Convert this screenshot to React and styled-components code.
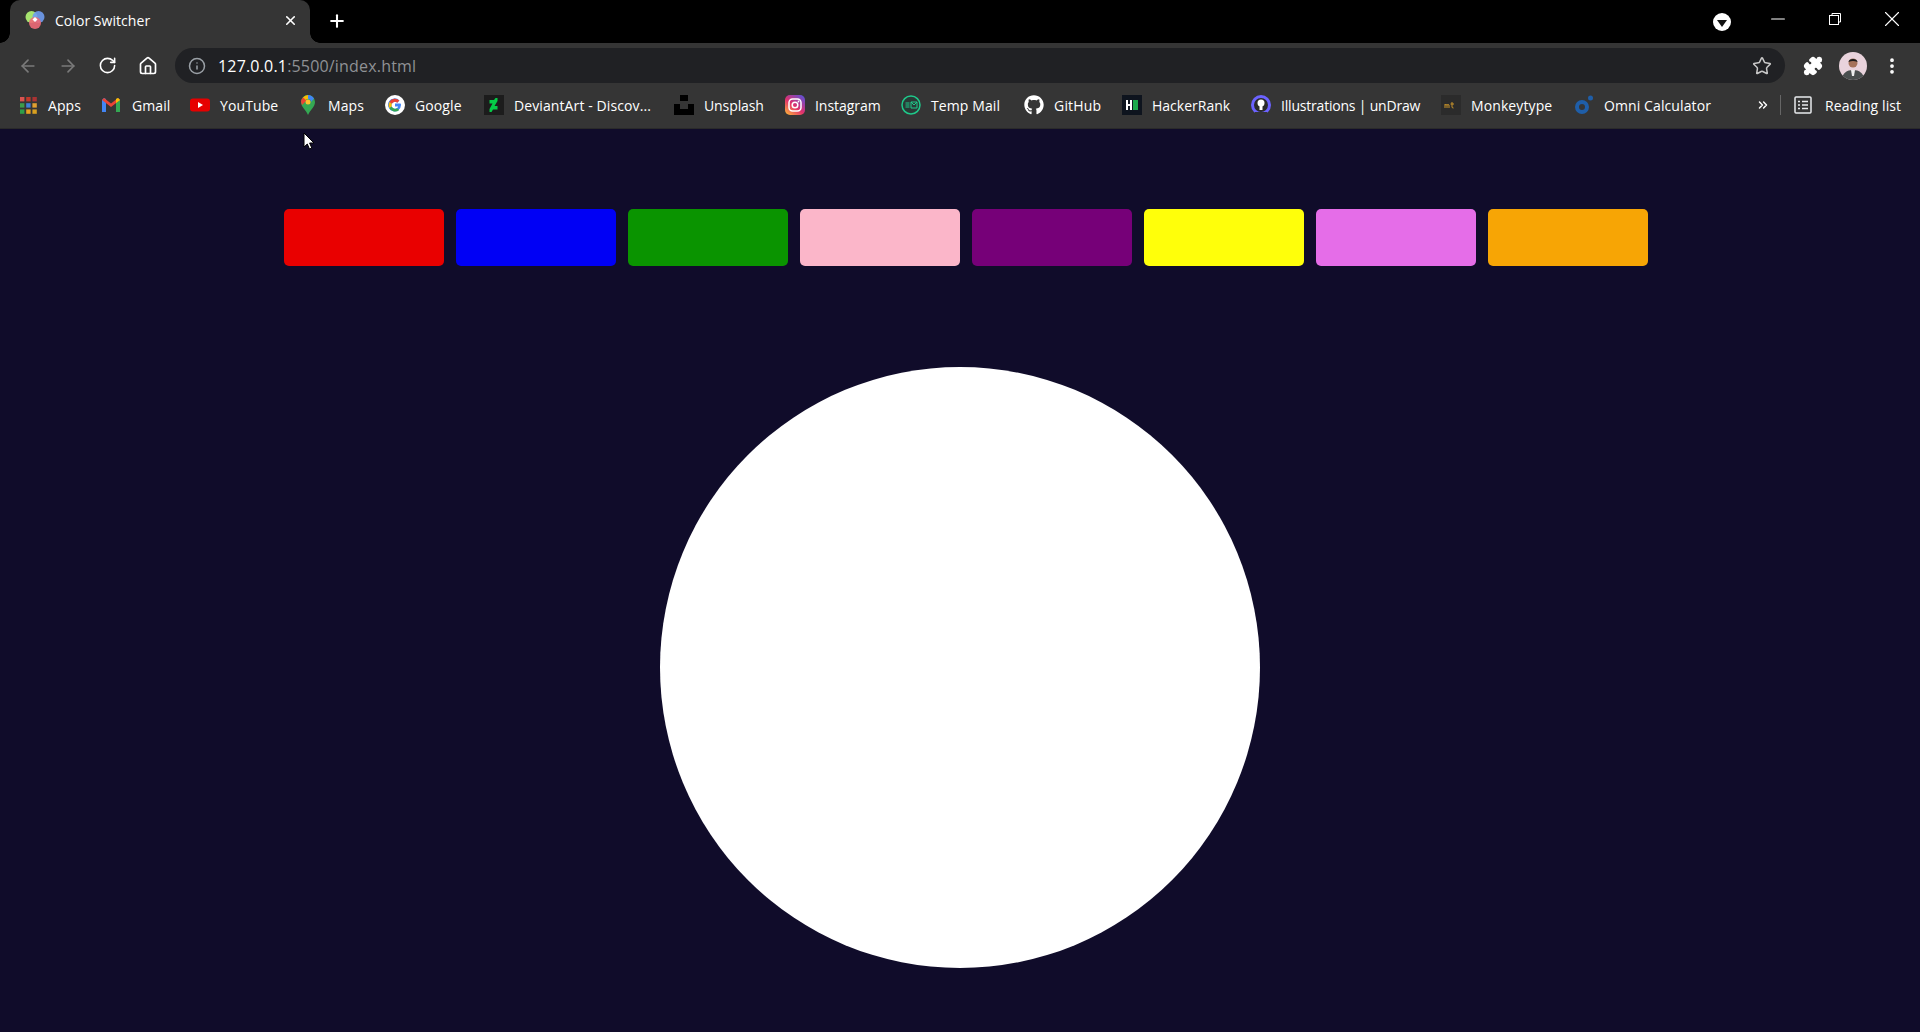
import React from "react";
import styled, { createGlobalStyle } from "styled-components";
import { Plus, X, ArrowLeft, ArrowRight, RotateCw, Home, Info, Star, Puzzle, EllipsisVertical, Minus, ChevronsRight } from "lucide-react";
import { FaGithub } from "react-icons/fa";

const GlobalStyle = createGlobalStyle`
  html, body {
    margin: 0;
    height: 100%;
    background: #100c2a;
    overflow: hidden;
  }
  * { box-sizing: border-box; }
`;

const Page = styled.div`
  width: 1920px;
  height: 1032px;
  display: flex;
  flex-direction: column;
  position: relative;
  font-family: "Open Sans", "Liberation Sans", sans-serif;
  color: #fff;
`;

const TabStrip = styled.div`
  height: 43px;
  background: #000;
  display: flex;
  align-items: stretch;
  padding-left: 10px;
`;

const Tab = styled.div`
  width: 300px;
  background: #353535;
  border-radius: 10px 10px 0 0;
  display: flex;
  align-items: center;
  padding: 0 12px 3px 15px;
  font-size: 14px;
  position: relative;
  &::before, &::after {
    content: "";
    position: absolute;
    bottom: 0;
    width: 10px;
    height: 10px;
    background: radial-gradient(circle at var(--cx) 0, #000 9.5px, #353535 10px);
  }
  &::before { left: -10px; --cx: 0; }
  &::after { right: -10px; --cx: 100%; }
`;

const TabTitle = styled.span`
  margin-left: 10px;
  flex: 1;
  letter-spacing: 0.05px;
`;

const NewTab = styled.div`
  width: 54px;
  display: flex;
  align-items: center;
  justify-content: center;
  padding-bottom: 1px;
`;

const Spacer = styled.div`
  flex: 1;
`;

const WindowControls = styled.div`
  display: flex;
  align-items: flex-start;
  padding-top: 9px;
  width: 224px;
  justify-content: flex-end;
`;

const ProfileDot = styled.div`
  width: 18px;
  height: 18px;
  margin-top: 4px;
  margin-right: 18px;
  border-radius: 50%;
  background: #fff;
  display: flex;
  align-items: center;
  justify-content: center;
`;

const Triangle = styled.div`
  width: 0;
  height: 0;
  border-left: 5px solid transparent;
  border-right: 5px solid transparent;
  border-top: 7px solid #111;
  margin-top: 2px;
`;

const WinButton = styled.div`
  width: 57px;
  height: 20px;
  display: flex;
  align-items: center;
  justify-content: center;
`;

const Toolbar = styled.div`
  height: 42px;
  background: #353535;
  display: flex;
  align-items: flex-start;
  padding: 5px 0 0 18px;
`;

const NavButton = styled.div`
  width: ${(p) => p.$w || 40}px;
  height: 35px;
  display: flex;
  align-items: center;
  justify-content: flex-start;
  color: ${(p) => (p.$off ? "#7a7a7a" : "#fff")};
`;

const Omnibox = styled.div`
  width: 1610px;
  height: 35px;
  margin-right: 7px;
  background: #202124;
  border-radius: 18px;
  display: flex;
  align-items: center;
  padding: 0 13px 0 13px;
  font-size: 16px;
  color: #fff;
`;

const UrlText = styled.div`
  margin-left: 12px;
  flex: 1;
  letter-spacing: 0.18px;
  span { color: #8f9195; }
`;

const ToolIcon = styled.div`
  width: ${(p) => p.$w}px;
  height: 35px;
  display: flex;
  align-items: center;
  justify-content: center;
`;

const Avatar = styled.svg`
  display: block;
`;

const BookmarkBar = styled.div`
  height: 44px;
  background: #353535;
  border-bottom: 1px solid #2a2a2a;
  display: flex;
  align-items: center;
  padding: 0 0 3px 18px;
  font-size: 14px;
`;

const Bookmark = styled.div`
  width: ${(p) => p.$w}px;
  flex: none;
  display: flex;
  align-items: center;
  white-space: nowrap;
  letter-spacing: ${(p) => p.$ls ?? 0.1}px;
`;

const BookmarkIcon = styled.svg`
  width: 20px;
  height: 20px;
  flex: none;
  margin-right: ${(p) => p.$gap ?? 10}px;
`;

const Overflow = styled.div`
  width: 20px;
  flex: none;
  margin-left: 1px;
  display: flex;
  justify-content: center;
`;

const Separator = styled.div`
  width: 1px;
  flex: none;
  height: 20px;
  background: #666;
  margin: 0 12px 0 7px;
`;

const Content = styled.main`
  flex: 1;
  background: #100c2a;
  display: flex;
  flex-direction: column;
  align-items: center;
`;

const Swatches = styled.div`
  display: flex;
  gap: 12px;
  margin-top: 80px;
  margin-left: 12px;
`;

const Swatch = styled.button`
  width: 160px;
  height: 57px;
  border: none;
  padding: 0;
  border-radius: 5px;
  background: ${(p) => p.$color};
`;

const Circle = styled.div`
  width: 600px;
  height: 601px;
  margin-top: 101px;
  border-radius: 50%;
  background: #fff;
`;

const Cursor = styled.svg`
  position: absolute;
  left: 303px;
  top: 132px;
`;

const swatches = ["#e90000", "#0000f5", "#0a9400", "#fbb6c9", "#760078", "#ffff0a", "#e56de8", "#f7a505"];

const AppsIcon = () => {
  const cols = ["#d9534f", "#c0392b", "#a33", "#3d9b4a", "#3f7fd8", "#e0a030", "#2e9e48", "#e8a020", "#d8a020"];
  return (
    <BookmarkIcon viewBox="0 0 20 20">
      {cols.map((c, i) => (
        <rect key={i} x={2 + (i % 3) * 6.200} y={2 + Math.floor(i / 3) * 6.200} width="4.400" height="4.400" fill={c} />
      ))}
    </BookmarkIcon>
  );
};

const GmailIcon = () => (
  <BookmarkIcon viewBox="0 0 20 20">
    <path d="M0 17V5l2-2 2 1v13z" fill="#4285f4" />
    <path d="M14 17V4l2-1 2 2v12z" fill="#34a853" />
    <path d="M0 5l2-2 7 5.500L16 3l2 2-9 7z" fill="#ea4335" />
    <path d="M14 4l2-1 2 2-4 3z" fill="#fbbc04" />
  </BookmarkIcon>
);

const YouTubeIcon = () => (
  <BookmarkIcon viewBox="0 0 20 20">
    <rect x="0" y="3.500" width="20" height="13" rx="3" fill="#e60000" />
    <path d="M8 7l5 3-5 3z" fill="#fff" />
  </BookmarkIcon>
);

const MapsIcon = () => (
  <BookmarkIcon viewBox="0 0 20 20">
    <path d="M10 20C8 15 3 12 3 7a7 7 0 0 1 14 0c0 5-5 8-7 13z" fill="#34a853" />
    <path d="M5 2.500A7 7 0 0 1 10 0v4a3 3 0 0 0-3 2L4 9.500z" fill="#f9bc05" />
    <path d="M10 0a7 7 0 0 1 6 3.500L13 7a3 3 0 0 0-3-3z" fill="#4285f4" />
    <path d="M3 7a7 7 0 0 1 2-4.500l3.500 3L4 10z" fill="#ea4335" />
    <circle cx="10" cy="7" r="2.500" fill="#fbc02d" />
  </BookmarkIcon>
);

const GoogleIcon = () => (
  <BookmarkIcon viewBox="0 0 20 20">
    <circle cx="10" cy="10" r="10" fill="#fff" />
    <path d="M15.500 8.500H10v3h3.200a3.500 3.500 0 1 1-1-3.800l2.200-2.100A6.500 6.500 0 1 0 16 10c0-.5 0-1-.5-1.500z" fill="#4285f4" />
    <path d="M4.300 7l2.500 1.800a3.500 3.500 0 0 1 5.400-1.100l2.200-2.100A6.500 6.500 0 0 0 4.300 7z" fill="#ea4335" />
    <path d="M4.300 13a6.500 6.500 0 0 0 10 2l-2.300-1.800a3.500 3.500 0 0 1-5.200-1.800z" fill="#34a853" />
    <path d="M4.300 7a6.500 6.500 0 0 0 0 6l2.500-1.800a3.500 3.500 0 0 1 0-2.400z" fill="#fbbc04" />
  </BookmarkIcon>
);

const DeviantIcon = () => (
  <BookmarkIcon viewBox="0 0 20 20">
    <rect width="20" height="20" fill="#1c1c1c" />
    <path d="M13.500 3v3l-3 5h3v3.500H9L7.500 17h-2v-3l3-5.500h-3V5h4.500L11.500 3z" fill="#05cc47" />
  </BookmarkIcon>
);

const UnsplashIcon = () => (
  <BookmarkIcon viewBox="0 0 20 20">
    <path d="M6 0h8v6H6zM0 9h6v5h8V9h6v11H0z" fill="#000" />
  </BookmarkIcon>
);

const InstagramIcon = () => (
  <BookmarkIcon viewBox="0 0 20 20">
    <defs>
      <linearGradient id="ig" x1="0.1" y1="1" x2="0.9" y2="0">
        <stop offset="0" stopColor="#fdb13a" />
        <stop offset="0.45" stopColor="#e1306c" />
        <stop offset="1" stopColor="#5b51d8" />
      </linearGradient>
    </defs>
    <rect width="20" height="20" rx="5" fill="url(#ig)" />
    <rect x="4" y="4" width="12" height="12" rx="3.500" fill="none" stroke="#fff" strokeWidth="1.500" />
    <circle cx="10" cy="10" r="2.800" fill="none" stroke="#fff" strokeWidth="1.500" />
    <circle cx="13.500" cy="6.500" r="0.900" fill="#fff" />
  </BookmarkIcon>
);

const TempMailIcon = () => (
  <BookmarkIcon viewBox="0 0 20 20">
    <circle cx="10" cy="10" r="9" fill="#2a3a36" stroke="#1fc98a" strokeWidth="1.500" />
    <path d="M10 7h6v6h-6zM10 7l3 3 3-3" fill="none" stroke="#1fc98a" strokeWidth="1" />
    <path d="M4.500 8h4M4.500 10h4M4.500 12h4" stroke="#1fc98a" strokeWidth="1" />
  </BookmarkIcon>
);

const HackerRankIcon = () => (
  <BookmarkIcon viewBox="0 0 20 20">
    <rect width="20" height="20" fill="#0e141e" />
    <path d="M4 5h2v4h2V5h2v10H8v-4H6v4H4z" fill="#fff" />
    <rect x="11" y="5" width="5" height="10" fill="#1ba94c" />
  </BookmarkIcon>
);

const UndrawIcon = () => (
  <BookmarkIcon viewBox="0 0 20 20">
    <circle cx="10" cy="10" r="8.500" fill="#2b2b2b" stroke="#6c63ff" strokeWidth="3" />
    <circle cx="10" cy="8" r="3.500" fill="#fff" />
    <rect x="8.500" y="10" width="3" height="5" fill="#fff" />
    <path d="M4 17h12v3H4z" fill="#353535" />
  </BookmarkIcon>
);

const MonkeyIcon = () => (
  <BookmarkIcon viewBox="0 0 20 20">
    <rect width="20" height="20" fill="#2b2b2b" />
    <path d="M4 13V9M4 10q1-1 2 0v3M6 10q1-1 2 0v3M11 7v5q0 1 1.500 1M9.500 9h3.500" fill="none" stroke="#c9942a" strokeWidth="1" />
  </BookmarkIcon>
);

const OmniIcon = () => (
  <BookmarkIcon viewBox="0 0 20 20">
    <circle cx="8" cy="12" r="5" fill="none" stroke="#1f5ea8" strokeWidth="4" />
    <circle cx="16.500" cy="3" r="2.500" fill="#1f5ea8" />
  </BookmarkIcon>
);

const GithubGlyph = styled(FaGithub)`
  width: 20px;
  height: 20px;
  margin-right: 10px;
  flex: none;
`;

const ReadingIcon = () => (
  <BookmarkIcon viewBox="0 0 20 20" $gap={12}>
    <rect x="2" y="2" width="16" height="16" rx="1" fill="none" stroke="#e8eaed" strokeWidth="1.500" />
    <path d="M5 6.500h2M5 10h2M5 13.500h2M9 6.500h6M9 10h6M9 13.500h6" stroke="#e8eaed" strokeWidth="1.500" />
  </BookmarkIcon>
);

const TabFavicon = () => (
  <svg width="20" height="20" viewBox="0 0 20 20">
    <circle cx="6.500" cy="7" r="6" fill="#a6e36e" />
    <circle cx="13.500" cy="7" r="6" fill="#6f9cf0" opacity="0.9" />
    <circle cx="10" cy="13" r="6" fill="#ee6a78" opacity="0.9" />
    <path d="M10 7l2.500 2.500L10 12 7.500 9.500z" fill="#fff" />
  </svg>
);

const bookmarks = [
  { label: "Apps", icon: <AppsIcon />, w: 84 },
  { label: "Gmail", icon: <GmailIcon />, w: 88 },
  { label: "YouTube", icon: <YouTubeIcon />, w: 108 },
  { label: "Maps", icon: <MapsIcon />, w: 87 },
  { label: "Google", icon: <GoogleIcon />, w: 99 },
  { label: "DeviantArt - Discov...", icon: <DeviantIcon />, w: 190 },
  { label: "Unsplash", icon: <UnsplashIcon />, w: 111, ls: -0.1 },
  { label: "Instagram", icon: <InstagramIcon />, w: 116, ls: -0.05 },
  { label: "Temp Mail", icon: <TempMailIcon />, w: 123 },
  { label: "GitHub", icon: <GithubGlyph />, w: 98, ls: 0.2 },
  { label: "HackerRank", icon: <HackerRankIcon />, w: 129, ls: 0 },
  { label: "Illustrations | unDraw", icon: <UndrawIcon />, w: 190, ls: -0.2 },
  { label: "Monkeytype", icon: <MonkeyIcon />, w: 133 },
  { label: "Omni Calculator", icon: <OmniIcon />, w: 178 },
];

export default function App() {
  return (
    <Page>
      <GlobalStyle />
      <TabStrip>
        <Tab>
          <TabFavicon />
          <TabTitle>Color Switcher</TabTitle>
          <X size={15} strokeWidth={2.5} />
        </Tab>
        <NewTab>
          <Plus size={20} strokeWidth={2.5} />
        </NewTab>
        <Spacer />
        <WindowControls>
          <ProfileDot>
            <Triangle />
          </ProfileDot>
          <WinButton>
            <Minus size={22} strokeWidth={1.1} />
          </WinButton>
          <WinButton>
            <svg width="14" height="14" viewBox="0 0 14 14" fill="none" stroke="#fff" strokeWidth="1">
              <rect x="1.500" y="3.500" width="9" height="9" />
              <path d="M4 3V1.500h8.500V10H11" />
            </svg>
          </WinButton>
          <WinButton>
            <X size={26} strokeWidth={1} />
          </WinButton>
        </WindowControls>
      </TabStrip>
      <Toolbar>
        <NavButton $off>
          <ArrowLeft size={20} strokeWidth={2} />
        </NavButton>
        <NavButton $off>
          <ArrowRight size={20} strokeWidth={2} />
        </NavButton>
        <NavButton>
          <RotateCw size={19} strokeWidth={2} />
        </NavButton>
        <NavButton $w={37}>
          <Home size={20} strokeWidth={2} />
        </NavButton>
        <Omnibox>
          <Info size={18} color="#9aa0a6" />
          <UrlText>
            127.0.0.1<span>:5500/index.html</span>
          </UrlText>
          <Star size={20} color="#c8c8c8" strokeWidth={1.8} />
        </Omnibox>
        <ToolIcon $w={41}>
          <Puzzle size={20} fill="#fff" />
        </ToolIcon>
        <ToolIcon $w={40}>
          <Avatar width="28" height="28" viewBox="0 0 28 28">
            <clipPath id="av">
              <circle cx="14" cy="14" r="14" />
            </clipPath>
            <g clipPath="url(#av)">
              <rect width="28" height="28" fill="#e9d3dc" />
              <path d="M3 28c0-7 5-10 11-10s11 3 11 10z" fill="#4a4f4f" />
              <path d="M12 18h4l-1 6h-2z" fill="#eee" />
              <circle cx="14" cy="11" r="4.500" fill="#a5725a" />
              <path d="M9.500 10c0-4 9-4 9 0-3-1.500-6-1.500-9 0z" fill="#1c1c1c" />
            </g>
          </Avatar>
        </ToolIcon>
        <ToolIcon $w={38}>
          <EllipsisVertical size={20} strokeWidth={2.5} />
        </ToolIcon>
      </Toolbar>
      <BookmarkBar>
        {bookmarks.map((b) => (
          <Bookmark key={b.label} $w={b.w} $ls={b.ls}>
            {b.icon}
            {b.label}
          </Bookmark>
        ))}
        <Overflow>
          <ChevronsRight size={14} strokeWidth={2.5} />
        </Overflow>
        <Separator />
        <Bookmark $w={120}>
          <ReadingIcon />
          Reading list
        </Bookmark>
      </BookmarkBar>
      <Content>
        <Swatches>
          {swatches.map((c) => (
            <Swatch key={c} $color={c} />
          ))}
        </Swatches>
        <Circle />
      </Content>
      <Cursor width="12" height="19" viewBox="0 0 12 19">
        <path d="M1 1v14l3.300-3 2.200 5 2.300-1-2.200-5H11z" fill="#fff" stroke="#000" strokeWidth="1" />
      </Cursor>
    </Page>
  );
}
